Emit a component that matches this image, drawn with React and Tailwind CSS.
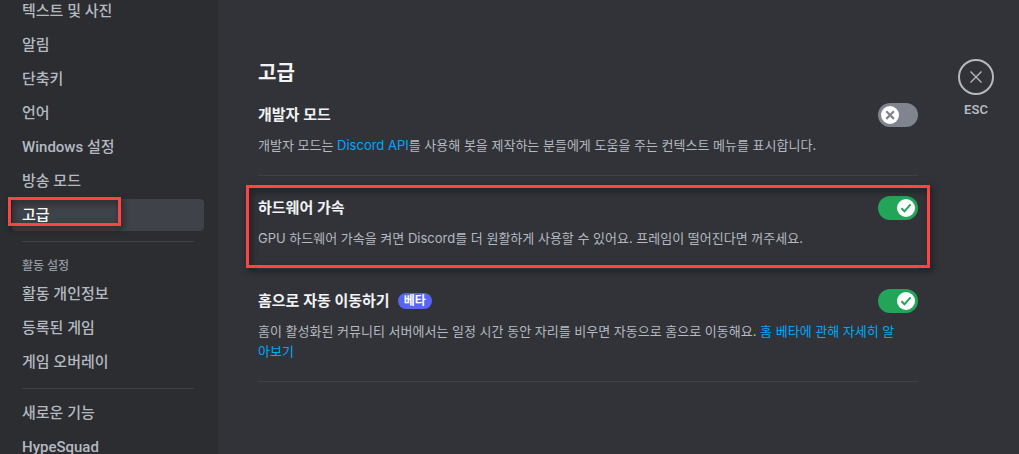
import React, { useState } from 'react';
import clsx from 'clsx';

const navGroups = [
  { items: ['텍스트 및 사진', '알림', '단축키', '언어', 'Windows 설정', '방송 모드', '고급'] },
  { title: '활동 설정', items: ['활동 개인정보', '등록된 게임', '게임 오버레이'] },
  { items: ['새로운 기능', 'HypeSquad'] },
];

function Highlight({ className }) {
  return (
    <div
      className={clsx(
        'absolute pointer-events-none border-3 border-[#ff4444] drop-shadow-[2px_3px_3px_rgba(0,0,0,0.6)]',
        className
      )}
    />
  );
}

function NavItem({ label, active, onSelect }) {
  return (
    <div className="relative">
      <button
        type="button"
        onClick={() => onSelect(label)}
        className={clsx(
          'block w-full h-8 px-2.5 rounded text-left text-[15px] leading-5 font-medium whitespace-nowrap',
          active ? 'bg-[#404249] text-white' : 'text-[#b5bac1] hover:bg-[#35373c]'
        )}
      >
        {label}
      </button>
      {label === '고급' && <Highlight className="-left-1 -top-0.5 w-[113px] h-[29px]" />}
    </div>
  );
}

function Sidebar() {
  const [current, setCurrent] = useState('고급');

  return (
    <nav className="w-[218px] shrink-0 bg-[#2b2d31] pl-3 pr-3.5 overflow-hidden">
      <div className="-mt-[5px]">
        {navGroups.map((group, i) => (
          <div key={i}>
            {i > 0 && <hr className="mx-2.5 mt-2.5 mb-2 border-[#3f4147]" />}
            {group.title && (
              <h2 className="h-7 px-2.5 pt-1 text-xs leading-6 font-medium text-[#949ba4]">{group.title}</h2>
            )}
            <div className="flex flex-col gap-0.5">
              {group.items.map((label) => (
                <NavItem key={label} label={label} active={label === current} onSelect={setCurrent} />
              ))}
            </div>
          </div>
        ))}
      </div>
    </nav>
  );
}

function Toggle({ id, checked, onChange }) {
  return (
    <span className="relative block w-10 h-6 shrink-0">
      <input
        id={id}
        type="checkbox"
        role="switch"
        checked={checked}
        onChange={(e) => onChange(e.target.checked)}
        className="block appearance-none w-10 h-6 rounded-full bg-[#80848e] checked:bg-[#23a559] cursor-pointer"
      />
      <svg
        viewBox="0 0 18 18"
        className={clsx('absolute top-[3px] w-[18px] h-[18px] pointer-events-none', checked ? 'right-[3px]' : 'left-[3px]')}
      >
        <circle cx="9" cy="9" r="9" fill="#fff" />
        {checked ? (
          <path d="M4.4 9.3 7.5 12.3 13.6 5.4" fill="none" stroke="#23a559" strokeWidth="2" />
        ) : (
          <path d="M5.3 5.3l7.6 7.6M12.9 5.3l-7.6 7.6" fill="none" stroke="#80848e" strokeWidth="2.2" />
        )}
      </svg>
    </span>
  );
}

function SettingRow({ id, title, badge, defaultOn, highlighted, children }) {
  const [on, setOn] = useState(defaultOn);

  return (
    <div className="relative border-b border-[#3f4147] pb-5">
      <div className="flex items-center justify-between h-6">
        <div className="flex items-center gap-2">
          <label htmlFor={id} className="text-[15px] leading-6 font-bold text-[#f2f3f5]">
            {title}
          </label>
          {badge && (
            <span className="h-4 px-1.5 rounded-full bg-[#5865f2] text-xs leading-4 font-bold text-white">{badge}</span>
          )}
        </div>
        <Toggle id={id} checked={on} onChange={setOn} />
      </div>
      <p className="mt-2 mr-4 font-[Inter,'Noto_Sans_CJK_KR',sans-serif] text-[13px] leading-5 text-[#b5bac1] break-all">
        {children}
      </p>
      {highlighted && <Highlight className="-inset-x-3 -top-[11px] bottom-0" />}
    </div>
  );
}

function Link({ children }) {
  return (
    <a href="#" className="text-[#00a8fc] hover:underline">
      {children}
    </a>
  );
}

export default function App() {
  return (
    <div className="flex h-screen overflow-hidden bg-[#313338] font-[Roboto,'Noto_Sans_CJK_KR',sans-serif]">
      <Sidebar />

      <main className="flex flex-1 min-w-0 items-start gap-10 pl-10 pr-6 pt-[59px]">
        <div className="flex-1 min-w-0 max-w-[660px]">
          <h1 className="mb-4 text-xl leading-7 font-bold text-[#f2f3f5]">고급</h1>
          <div className="flex flex-col gap-5">
            <SettingRow id="developer-mode" title="개발자 모드" defaultOn={false}>
              개발자 모드는 <Link>Discord API</Link>를 사용해 봇을 제작하는 분들에게 도움을 주는 컨텍스트 메뉴를
              표시합니다.
            </SettingRow>
            <SettingRow id="hardware-acceleration" title="하드웨어 가속" defaultOn highlighted>
              GPU 하드웨어 가속을 켜면 Discord를 더 원활하게 사용할 수 있어요. 프레임이 떨어진다면 꺼주세요.
            </SettingRow>
            <SettingRow id="auto-home" title="홈으로 자동 이동하기" badge="베타" defaultOn>
              홈이 활성화된 커뮤니티 서버에서는 일정 시간 동안 자리를 비우면 자동으로 홈으로 이동해요.{' '}
              <Link>홈 베타에 관해 자세히 알아보기</Link>
            </SettingRow>
          </div>
        </div>

        {/* Close */}
        <button type="button" className="flex flex-col items-center gap-[7px] text-[#b5bac1]">
          <span className="flex items-center justify-center w-9 h-9 rounded-full border-2 border-current">
            <svg viewBox="0 0 12 12" className="w-3 h-3" fill="none" stroke="currentColor" strokeWidth="1.4">
              <path d="M.5.5l11 11M11.5.5l-11 11" />
            </svg>
          </span>
          <span className="text-[13px] leading-4 font-semibold">ESC</span>
        </button>
      </main>
    </div>
  );
}
